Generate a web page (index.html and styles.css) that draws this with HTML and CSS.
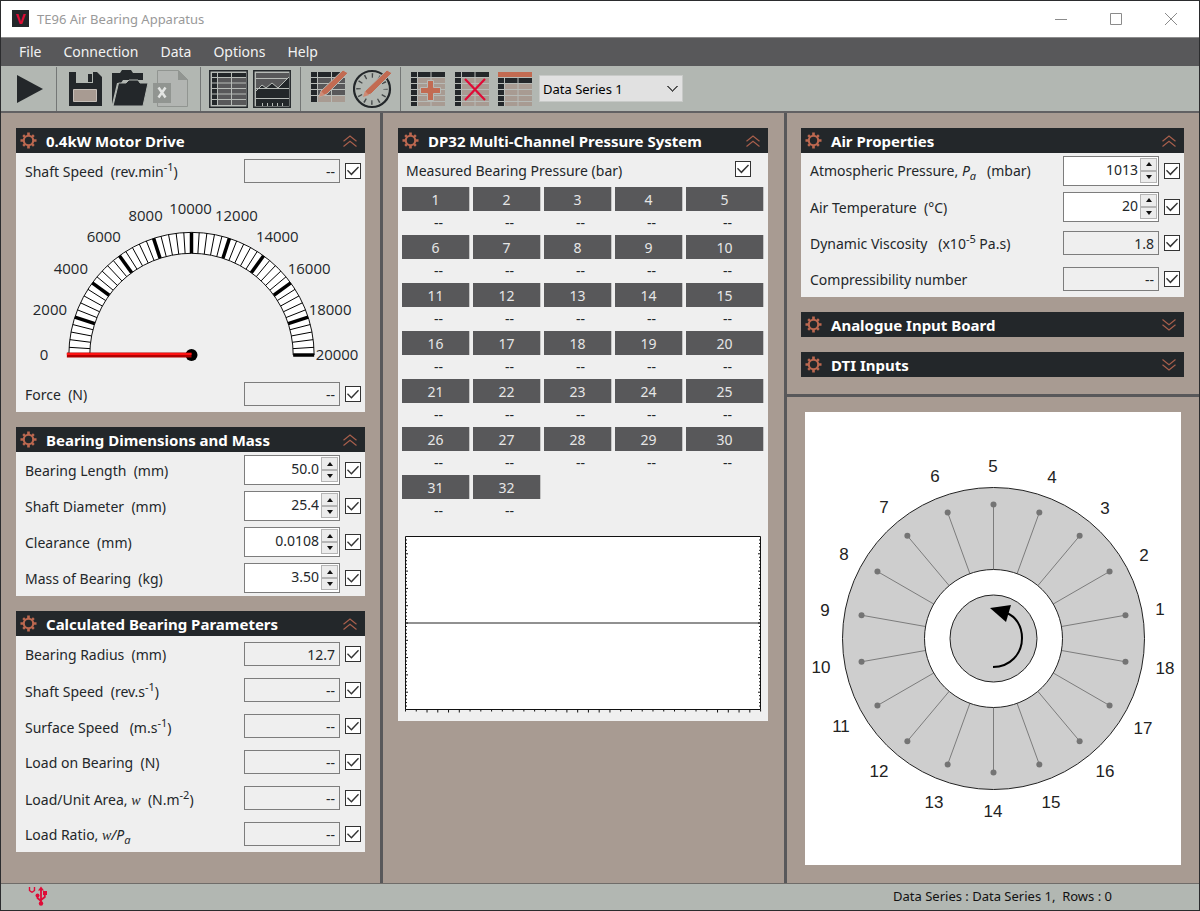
FILE: index.html
```html
<!DOCTYPE html>
<html lang="en">
<head>
<meta charset="utf-8">
<title>TE96 Air Bearing Apparatus</title>
<link rel="stylesheet" href="styles.css">
</head>
<body>
<svg class="defs" aria-hidden="true">
  <symbol id="gear" viewBox="0 0 18 18">
    <g fill="currentColor">
      <path d="M7.6 0.5h2.8v3.5H7.6zM7.6 14h2.8v3.5H7.6zM.5 7.6H4v2.8H.5zM14 7.6h3.5v2.8H14z"/>
      <path d="M7.7 1h2.6v3H7.7zM7.7 14h2.6v3H7.7zM1 7.7h3v2.6H1zM14 7.7h3v2.6h-3z" transform="rotate(45 9 9)"/>
    </g>
    <circle cx="9" cy="9" r="5" fill="none" stroke="currentColor" stroke-width="2.2"/>
  </symbol>
  <symbol id="fold" viewBox="0 0 16 12">
    <path d="M1.500 6.200 8 1l6.500 5.200M1.500 11.500 8 6.300l6.500 5.200" fill="none" stroke="currentColor" stroke-width="1.200"/>
  </symbol>
  <symbol id="pen" viewBox="0 0 40 40">
    <path d="M10 28l2-6L34 1l5 3-21 21z" fill="#c26b52" stroke="#b2b7b2" stroke-width="1"/>
    <path d="M10 28l2-6 4 4z" fill="#cf8a75"/>
  </symbol>
</svg>
<div class="window">
  <header class="titlebar">
    <svg class="logo" viewBox="0 0 17 17" aria-hidden="true"><path fill="#23272a" d="M0 0h17v17H0z"/><text x="8.500" y="14">V</text></svg>
    <h1 class="title">TE96 Air Bearing Apparatus</h1>
    <button class="win-btn" aria-label="Minimize"><svg viewBox="0 0 14 14"><path d="M1 7.500h12"/></svg></button>
    <button class="win-btn" aria-label="Maximize"><svg viewBox="0 0 14 14"><path d="M1.500 1.500h11v11h-11z"/></svg></button>
    <button class="win-btn" aria-label="Close"><svg viewBox="0 0 14 14"><path d="M1 1l12 12M13 1L1 13"/></svg></button>
  </header>
  <nav class="menubar">
    <button>File</button><button>Connection</button><button>Data</button><button>Options</button><button>Help</button>
  </nav>
  <div class="toolbar">
    <button class="tool" aria-label="Run"><svg viewBox="0 0 40 40"><path fill="#23272a" d="M8 6l26 14L8 34z"/></svg></button>
    <span class="sep"></span>
    <button class="tool" aria-label="Save"><svg viewBox="0 0 40 40"><path fill="#23272a" d="M4 3h28l5 5v29H4z"/><path fill="#b2b7b2" d="M11 3h17v11H11z"/><path fill="#23272a" d="M23 5h4v8h-4z"/><path fill="#a89b92" stroke="#c6bfb9" d="M8.500 20.500h23v12h-23z"/></svg></button>
    <button class="tool" aria-label="Open"><svg viewBox="0 0 40 40"><path fill="#23272a" d="M3 4h8l2-3h9l2 3h10v7H14l-2 3H8L3 35z"/><path fill="#23272a" d="M9.500 14H17l3-3h9l2 3h8l-5 23H4z" stroke="#b2b7b2"/></svg></button>
    <button class="tool" aria-label="Export to Excel"><svg viewBox="0 0 40 40"><path fill="#b2b5b2" stroke="#919591" d="M4.500 1.500h21l9 9v27h-30z"/><path fill="#919591" d="M25 1l10 10H25zM0 14h18v20H0z"/><path d="M5.500 18.500l7 10M12.500 18.500l-7 10" stroke="#e3e5e3" stroke-width="2.500"/></svg></button>
    <span class="sep"></span>
    <button class="tool" aria-label="Data table"><svg viewBox="0 0 40 40"><path fill="#b7bbb7" stroke="#23272a" stroke-width="1.500" d="M.8 1.800h37.400v36.400H.8z"/><path fill="#23272a" d="M3 4h5v32H3zM9 4h28v4H9z"/><path fill="#58585a" d="M9 9h28v27H9z"/><path stroke="#b7bbb7" d="M8.500 3v34M22.500 3v34M3 8.500h34M3 14h34M3 19.500h34M3 25h34M3 30.500h34"/></svg></button>
    <button class="tool" aria-label="Chart"><svg viewBox="0 0 40 40"><path fill="#b7bbb7" stroke="#23272a" stroke-width="1.500" d="M.8 1.800h36.400v36.400H.8z"/><path fill="#58585a" d="M3 4h33v17H3z"/><path fill="#23272a" d="M3 21l6-5 4 3 6-5 6 5L36 8v29H3z"/><path stroke="#b7bbb7" fill="none" d="M3 9.500h31M3 19.500h33M3 29.500h33M3 22l6-6 4 3 6-5 6 5L36 8M9.500 34v3M14.500 34v3M19.500 34v3M24.500 34v3M29.500 34v3"/></svg></button>
    <span class="sep"></span>
    <button class="tool" aria-label="Edit table"><svg viewBox="0 0 40 40"><path fill="#23272a" d="M2 3h34v5H8v25H2z"/><path fill="#58585a" d="M9 9h27v18H9z"/><path fill="#a89b92" d="M9 27h27v6H9z"/><path stroke="#b7bbb7" d="M8.500 3v30M22.500 3v30M2 8.500h34M2 14.500h34M2 20.500h34M2 26.500h34"/><use href="#pen"/></svg></button>
    <button class="tool" aria-label="Timing"><svg viewBox="0 0 40 40"><circle cx="19" cy="20" r="18" fill="none" stroke="#23272a" stroke-width="2.200"/><circle cx="19" cy="20" r="13.500" fill="none" stroke="#444849" stroke-width="4.500" stroke-dasharray="1.400 5.669" stroke-dashoffset=".7"/><use href="#pen"/></svg></button>
    <span class="sep"></span>
    <button class="tool" aria-label="Add series"><svg viewBox="0 0 40 40"><path fill="#a89b92" d="M2 3h34v34H2z"/><path fill="#23272a" d="M2 3h34v5H8v29H2z"/><path stroke="#b7bbb7" d="M8.500 3v34M22 3v34M2 8.500h34M2 14.500h34M2 20.500h34M2 26.500h34M2 32.500h34"/><path fill="#c26b52" stroke="#b7bbb7" d="M18.500 11.500h6v7h7v6h-7v7h-6v-7h-7v-6h7z"/></svg></button>
    <button class="tool" aria-label="Delete series"><svg viewBox="0 0 40 40"><path fill="#a89b92" d="M2 3h34v34H2z"/><path fill="#23272a" d="M2 3h34v5H8v29H2z"/><path stroke="#b7bbb7" d="M8.500 3v34M22 3v34M2 8.500h34M2 14.500h34M2 20.500h34M2 26.500h34M2 32.500h34"/><path stroke="#df0b37" stroke-width="2.200" d="M12 10l20 21M32 10L12 31"/></svg></button>
    <button class="tool" aria-label="Series header"><svg viewBox="0 0 40 40"><path fill="#a89b92" d="M1 9h34v28H1z"/><path fill="#c26b52" d="M1 3h34v5H1z"/><path fill="#23272a" d="M1 9h34v5H7v23H1z"/><path stroke="#b7bbb7" d="M7.500 9v28M21 9v28M1 8.500h34M1 14.500h34M1 20.500h34M1 26.500h34M1 32.500h34"/></svg></button>
    <select class="series" aria-label="Data series"><option>Data Series 1</option></select>
  </div>

  <main class="workspace">
    <section class="col">
      <article class="panel">
        <h2 class="panel-head"><svg class="gear"><use href="#gear"/></svg><span>0.4kW Motor Drive</span><button class="fold" aria-label="Collapse"><svg><use href="#fold"/></svg></button></h2>
        <div class="row"><label for="spd">Shaft Speed&nbsp; (rev.min<sup>-1</sup>)</label><input class="read" id="spd" value="--" readonly><input type="checkbox" checked aria-label="Record shaft speed"></div>
        <svg class="gauge" id="gauge" viewBox="15 189 350 188" role="img" aria-label="Shaft speed gauge"></svg>
        <div class="row"><label for="frc">Force&nbsp; (N)</label><input class="read" id="frc" value="--" readonly><input type="checkbox" checked aria-label="Record force"></div>
      </article>
      <article class="panel">
        <h2 class="panel-head"><svg class="gear"><use href="#gear"/></svg><span>Bearing Dimensions and Mass</span><button class="fold" aria-label="Collapse"><svg><use href="#fold"/></svg></button></h2>
        <div class="row"><label for="len">Bearing Length&nbsp; (mm)</label><span class="spin"><input type="number" step="any" id="len" value="50.0"><button aria-label="Increase length"></button><button class="down" aria-label="Decrease length"></button></span><input type="checkbox" checked aria-label="Record length"></div>
        <div class="row"><label for="dia">Shaft Diameter&nbsp; (mm)</label><span class="spin"><input type="number" step="any" id="dia" value="25.4"><button aria-label="Increase diameter"></button><button class="down" aria-label="Decrease diameter"></button></span><input type="checkbox" checked aria-label="Record diameter"></div>
        <div class="row"><label for="clr">Clearance&nbsp; (mm)</label><span class="spin"><input type="number" step="any" id="clr" value="0.0108"><button aria-label="Increase clearance"></button><button class="down" aria-label="Decrease clearance"></button></span><input type="checkbox" checked aria-label="Record clearance"></div>
        <div class="row"><label for="mass">Mass of Bearing&nbsp; (kg)</label><span class="spin"><input type="number" step="any" id="mass" value="3.50"><button aria-label="Increase mass"></button><button class="down" aria-label="Decrease mass"></button></span><input type="checkbox" checked aria-label="Record mass"></div>
      </article>
      <article class="panel">
        <h2 class="panel-head"><svg class="gear"><use href="#gear"/></svg><span>Calculated Bearing Parameters</span><button class="fold" aria-label="Collapse"><svg><use href="#fold"/></svg></button></h2>
        <div class="row"><label for="rad">Bearing Radius&nbsp; (mm)</label><input class="read" id="rad" value="12.7" readonly><input type="checkbox" checked aria-label="Record radius"></div>
        <div class="row"><label for="sps">Shaft Speed&nbsp; (rev.s<sup>-1</sup>)</label><input class="read" id="sps" value="--" readonly><input type="checkbox" checked aria-label="Record shaft speed per second"></div>
        <div class="row"><label for="srf">Surface Speed&nbsp;&nbsp; (m.s<sup>-1</sup>)</label><input class="read" id="srf" value="--" readonly><input type="checkbox" checked aria-label="Record surface speed"></div>
        <div class="row"><label for="lob">Load on Bearing&nbsp; (N)</label><input class="read" id="lob" value="--" readonly><input type="checkbox" checked aria-label="Record load"></div>
        <div class="row"><label for="lua">Load/Unit Area, <i class="math">w</i>&nbsp; (N.m<sup>-2</sup>)</label><input class="read" id="lua" value="--" readonly><input type="checkbox" checked aria-label="Record load per area"></div>
        <div class="row"><label for="lra">Load Ratio, <i><span class="math">w</span>/P<sub>a</sub></i></label><input class="read" id="lra" value="--" readonly><input type="checkbox" checked aria-label="Record load ratio"></div>
      </article>
    </section>

    <section class="col">
      <article class="panel">
        <h2 class="panel-head"><svg class="gear"><use href="#gear"/></svg><span>DP32 Multi-Channel Pressure System</span><button class="fold" aria-label="Collapse"><svg><use href="#fold"/></svg></button></h2>
        <div class="row pressure-row"><label for="mbp">Measured Bearing Pressure (bar)</label><input type="checkbox" id="mbp" checked></div>
        <table class="channels">
          <colgroup><col span="4"><col class="last"></colgroup>
          <tr><th>1</th><th>2</th><th>3</th><th>4</th><th>5</th></tr>
          <tr><td>--</td><td>--</td><td>--</td><td>--</td><td>--</td></tr>
          <tr><th>6</th><th>7</th><th>8</th><th>9</th><th>10</th></tr>
          <tr><td>--</td><td>--</td><td>--</td><td>--</td><td>--</td></tr>
          <tr><th>11</th><th>12</th><th>13</th><th>14</th><th>15</th></tr>
          <tr><td>--</td><td>--</td><td>--</td><td>--</td><td>--</td></tr>
          <tr><th>16</th><th>17</th><th>18</th><th>19</th><th>20</th></tr>
          <tr><td>--</td><td>--</td><td>--</td><td>--</td><td>--</td></tr>
          <tr><th>21</th><th>22</th><th>23</th><th>24</th><th>25</th></tr>
          <tr><td>--</td><td>--</td><td>--</td><td>--</td><td>--</td></tr>
          <tr><th>26</th><th>27</th><th>28</th><th>29</th><th>30</th></tr>
          <tr><td>--</td><td>--</td><td>--</td><td>--</td><td>--</td></tr>
          <tr><th>31</th><th>32</th></tr>
          <tr><td>--</td><td>--</td></tr>
        </table>
        <svg class="plot" id="plot" viewBox="0 0 358 178" role="img" aria-label="Pressure plot"></svg>
      </article>
    </section>

    <div class="right">
      <section class="col">
        <article class="panel">
          <h2 class="panel-head"><svg class="gear"><use href="#gear"/></svg><span>Air Properties</span><button class="fold" aria-label="Collapse"><svg><use href="#fold"/></svg></button></h2>
          <div class="row"><label for="atm">Atmospheric Pressure, <i>P<sub>a</sub></i>&nbsp;&nbsp; (mbar)</label><span class="spin"><input type="number" id="atm" value="1013"><button aria-label="Increase pressure"></button><button class="down" aria-label="Decrease pressure"></button></span><input type="checkbox" checked aria-label="Record pressure"></div>
          <div class="row"><label for="tmp">Air Temperature&nbsp; (°C)</label><span class="spin"><input type="number" id="tmp" value="20"><button aria-label="Increase temperature"></button><button class="down" aria-label="Decrease temperature"></button></span><input type="checkbox" checked aria-label="Record temperature"></div>
          <div class="row"><label for="vis">Dynamic Viscosity&nbsp;&nbsp; (x10<sup>-5</sup> Pa.s)</label><input class="read" id="vis" value="1.8" readonly><input type="checkbox" checked aria-label="Record viscosity"></div>
          <div class="row"><label for="cmp">Compressibility number</label><input class="read" id="cmp" value="--" readonly><input type="checkbox" checked aria-label="Record compressibility"></div>
        </article>
        <article class="panel">
          <h2 class="panel-head"><svg class="gear"><use href="#gear"/></svg><span>Analogue Input Board</span><button class="fold closed" aria-label="Expand"><svg><use href="#fold"/></svg></button></h2>
        </article>
        <article class="panel">
          <h2 class="panel-head"><svg class="gear"><use href="#gear"/></svg><span>DTI Inputs</span><button class="fold closed" aria-label="Expand"><svg><use href="#fold"/></svg></button></h2>
        </article>
      </section>
      <section class="diagram">
        <svg class="bearing" id="bearing" viewBox="805 412 376 453" role="img" aria-label="Bearing tapping positions"></svg>
      </section>
    </div>
  </main>

  <footer class="status">
    <svg class="usb" viewBox="0 0 20 20" aria-label="USB status"><g fill="none" stroke="#df0b37"><path stroke-width="1.400" d="M1.500 1v3.500L3.500 6h1L6.500 4.500V1"/><path stroke-width="1.800" d="M13 3v15M9.500 9v3l3.500 3M16.800 8v3L13 14"/></g><path fill="#df0b37" d="M10 4.500L13 .5l3 4zM15 5h4v4h-4z"/><circle cx="9.500" cy="9.500" r="2" fill="#df0b37"/><circle cx="13" cy="17.500" r="2.200" fill="#df0b37"/></svg>
    <span class="summary">Data Series : Data Series 1,&nbsp; Rows : 0</span>
  </footer>
</div>
<script src="drawings.js"></script>
</body>
</html>
```
FILE: styles.css
```css
* { box-sizing: border-box; }
body { margin: 0; font-family: "Noto Sans", "Open Sans", sans-serif; font-size: 14px; color: #23272a; }
button, input, select { font: inherit; color: inherit; margin: 0; }
button { border: 0; padding: 0; background: none; }
.defs { display: none; }
.window { min-height: 100vh; display: flex; flex-direction: column; border: 1px solid #2b2c2e; background: #a89b92; }

.titlebar { height: 37px; display: flex; align-items: center; background: #fff; padding: 0 1px 1px 11px; border-bottom: 1px solid #8d8d8d; }
.logo { width: 17px; height: 17px; }
.logo text { font: 700 15px "Open Sans", sans-serif; fill: #df0b37; text-anchor: middle; }
.title { margin: 0 auto 0 8px; font-size: 13px; font-weight: 400; color: #999; }
.win-btn { width: 55px; height: 36px; display: flex; align-items: center; justify-content: center; }
.win-btn svg { width: 14px; height: 14px; fill: none; stroke: #8b8b8b; stroke-width: 1; }

.menubar { height: 28px; display: flex; align-items: center; gap: 22px; padding: 0 0 2px 18px; background: #58585a; color: #f2f2f2; }

.toolbar { height: 47px; display: flex; align-items: center; gap: 4px; padding-left: 8px; background: #b2b7b2; border-bottom: 2px solid #626163; }
.tool, .tool svg { width: 40px; height: 40px; display: block; flex: none; }
.sep { width: 1px; height: 44px; margin: 0 4px 0 3px; background: #747776; }
.series { width: 144px; height: 27px; margin-left: -2px; padding: 0 10px 0 3px; border: 1px solid #c8cac8; background: #e1e1e1; appearance: none; color: #000;
  background-image: linear-gradient(45deg, transparent 44%, #555 44%, #555 60%, transparent 60%), linear-gradient(-45deg, transparent 44%, #555 44%, #555 60%, transparent 60%);
  background-size: 6px 6px; background-repeat: no-repeat; background-position: 127px 10px, 132px 10px; font-size: 13px; }

.workspace { flex: 1; display: grid; grid-template-columns: 382fr 404fr 412fr; }
.col { padding: 15px 15px 15px 14px; display: flex; flex-direction: column; gap: 15px; }
.workspace > .col { border-right: 3px solid #58585a; }
.workspace > .col:nth-child(1) { padding-right: 15px; padding-left: 15px; }
.workspace > .col:nth-child(2) { padding-left: 15px; padding-right: 16px; }
.panel { background: #efefef; }
.panel-head { margin: 0; height: 25px; display: flex; align-items: center; padding: 0 7px 0 4px; background: #23272a; color: #fff; font-size: 15px; font-weight: 700; }
.panel-head span { flex: 1; padding-left: 9px; white-space: nowrap; }
.gear { width: 17px; height: 17px; color: #bc6850; }
.fold { color: #a85f4c; display: flex; }
.fold svg { width: 16px; height: 12px; }
.fold.closed { transform: scaleY(-1); }

.row { height: 36px; display: flex; align-items: center; gap: 5px; padding: 0 4px 0 9px; }
.row label { flex: 1; white-space: nowrap; }
sup, sub { font-size: 11px; line-height: 1; }
.math { font-family: "Liberation Serif", serif; font-style: italic; }
.read { width: 96px; height: 24px; border: 1px solid #7d7d7d; background: #efefef; text-align: right; padding: 0 4px; }
.spin { width: 96px; height: 30px; display: grid; grid-template: 1fr 1fr / 1fr 17px; gap: 0 2px; padding: 1px 1px 2px; border: 1px solid #7d7d7d; background: #fff; }
.spin input { grid-row: 1 / 3; width: 100%; min-width: 0; border: 0; padding: 0 0 2px; text-align: right; background: none; appearance: textfield; }
.spin input::-webkit-inner-spin-button { appearance: none; }
.spin button { border: 1px solid #b5b5b5; background: #ececec; display: grid; place-items: center; }
.spin button::before { content: ""; border: 3px solid transparent; border-top: 0; border-bottom: 4px solid #111; }
.spin .down::before { border-bottom: 0; border-top: 4px solid #111; }
input[type="checkbox"] { appearance: none; flex: none; width: 16px; height: 16px; border: 1px solid #333; background: #fff; display: grid; place-items: center; }
input[type="checkbox"]:checked::before { content: ""; width: 12px; height: 10px; background: #333; clip-path: polygon(0 48%, 8% 38%, 36% 72%, 92% 4%, 100% 14%, 37% 94%); }

.gauge { display: block; width: 100%; }
.gauge text { font-family: "Open Sans", sans-serif; font-size: 15px; text-anchor: middle; fill: #23272a; }

.pressure-row { height: 32px; padding: 0 17px 0 8px; }
.pressure-row label { padding-top: 3px; }
.channels { width: calc(100% - 2px); margin: 2px 0 0 1px; table-layout: fixed; border-spacing: 3px 0; }
.channels col { width: 68px; }
.channels col.last { width: auto; }
.channels th { height: 24px; padding: 0; background: #58585a; color: #e6e6e6; font-weight: 400; background-clip: padding-box; border-right: 1px solid #c4c4c4; }
.channels td { height: 24px; padding: 0 0 0 5px; text-align: center; line-height: 20px; }
.plot { display: block; width: calc(100% - 12px); margin: 12px 6px 8px; }

.right { display: flex; flex-direction: column; }
.right .col { padding-bottom: 17px; }
.diagram { flex: 1; border-top: 3px solid #58585a; padding: 15px 18px 18px; }
.bearing { display: block; width: 100%; background: #fff; }
.bearing text { font-family: "Liberation Sans", Arial, sans-serif; font-size: 17px; text-anchor: middle; fill: #222; }

.status { height: 27px; display: flex; align-items: center; justify-content: space-between; padding: 0 87px 2px 27px; border-top: 1px solid #6f6c69; background: #b2b7b2; color: #111; font-size: 13px; }
.usb { width: 20px; height: 20px; }
```
FILE: drawings.js
```js
const SVG_NS = "http://www.w3.org/2000/svg";

function add(parent, name, attrs, text) {
  const el = document.createElementNS(SVG_NS, name);
  for (const key in attrs) el.setAttribute(key, attrs[key]);
  if (text !== undefined) el.textContent = text;
  parent.appendChild(el);
  return el;
}

function polar(cx, cy, r, degrees) {
  const a = degrees * Math.PI / 180;
  return [cx + r * Math.cos(a), cy - r * Math.sin(a)];
}

function ray(svg, cx, cy, r1, r2, degrees, stroke, width) {
  const [x1, y1] = polar(cx, cy, r1, degrees);
  const [x2, y2] = polar(cx, cy, r2, degrees);
  add(svg, "line", { x1, y1, x2, y2, stroke, "stroke-width": width });
}

function drawGauge(svg) {
  const cx = 191, cy = 355.5;
  add(svg, "path", { d: "M68 355.500a123 123 0 0 1 246 0h-21a102 102 0 0 0-204 0z", fill: "#fff", stroke: "#111" });
  for (let i = 0; i <= 50; i++) ray(svg, cx, cy, 102, 123, 180 - i * 3.6, "#000", i % 5 ? 1 : 3.5);
  add(svg, "circle", { cx, cy, r: 6, fill: "#000" });
  add(svg, "path", { d: "M66 353h125v5H66z", fill: "#b00000" });
  add(svg, "path", { d: "M66 353.500h125v2H66z", fill: "#ff1212" });
  const spots = [[43, 355], [49, 309], [70, 268], [103, 236], [145, 215], [190, 208], [236, 215], [277, 236], [309, 268], [330, 309], [337, 355]];
  spots.forEach(([x, y], i) => add(svg, "text", { x, y: y + 6 }, i * 2000));
}

function drawPlot(svg) {
  add(svg, "path", { d: "M1.500 1.500h355v173h-355z", fill: "#fff", stroke: "#111" });
  add(svg, "path", { d: "M1 88h356", stroke: "#222" });
  for (let i = 1; i < 50; i++) {
    const y = 1.5 + i * 3.46, len = i % 5 ? 2 : 3;
    add(svg, "path", { d: `M1 ${y}h${len}M357 ${y}h-${len}`, stroke: "#111" });
  }
  for (let i = 0; i <= 33; i++) {
    const len = [2, 3, 4, 5, 15, 16, 17, 18, 19, 29, 30, 31, 32].includes(i) ? 3 : 2;
    add(svg, "path", { d: `M${1.5 + i * 10.76} 174.500v${len}`, stroke: "#111" });
  }
}

function drawBearing(svg) {
  const cx = 993.5, cy = 638.5;
  add(svg, "circle", { cx, cy, r: 151, fill: "#cecece", stroke: "#222" });
  for (let i = 0; i < 18; i++) {
    const deg = 10 + i * 20;
    ray(svg, cx, cy, 69, 134, deg, "#7c7c7c", 1);
    const [x, y] = polar(cx, cy, 134, deg);
    add(svg, "circle", { cx: x, cy: y, r: 3, fill: "#747474" });
  }
  add(svg, "circle", { cx, cy, r: 69, fill: "#fff", stroke: "#222" });
  add(svg, "circle", { cx, cy, r: 43.5, fill: "#cecece", stroke: "#222" });
  add(svg, "path", { d: "M993 667c17 0 29-13 29-29 0-12-6-21-15-25", fill: "none", stroke: "#000", "stroke-width": 2 });
  add(svg, "path", { d: "M990 608l21-3-5 17z", fill: "#000" });
  const spots = [[1160, 609], [1144, 555], [1105, 508], [1052, 477], [993, 466], [935, 476], [884, 507], [844, 554], [825, 610],
    [821, 667], [841, 726], [879, 771], [934, 802], [993, 811], [1051, 802], [1105, 771], [1143, 728], [1165, 668]];
  spots.forEach(([x, y], i) => add(svg, "text", { x, y: y + 6 }, i + 1));
}

drawGauge(document.getElementById("gauge"));
drawPlot(document.getElementById("plot"));
drawBearing(document.getElementById("bearing"));
```
